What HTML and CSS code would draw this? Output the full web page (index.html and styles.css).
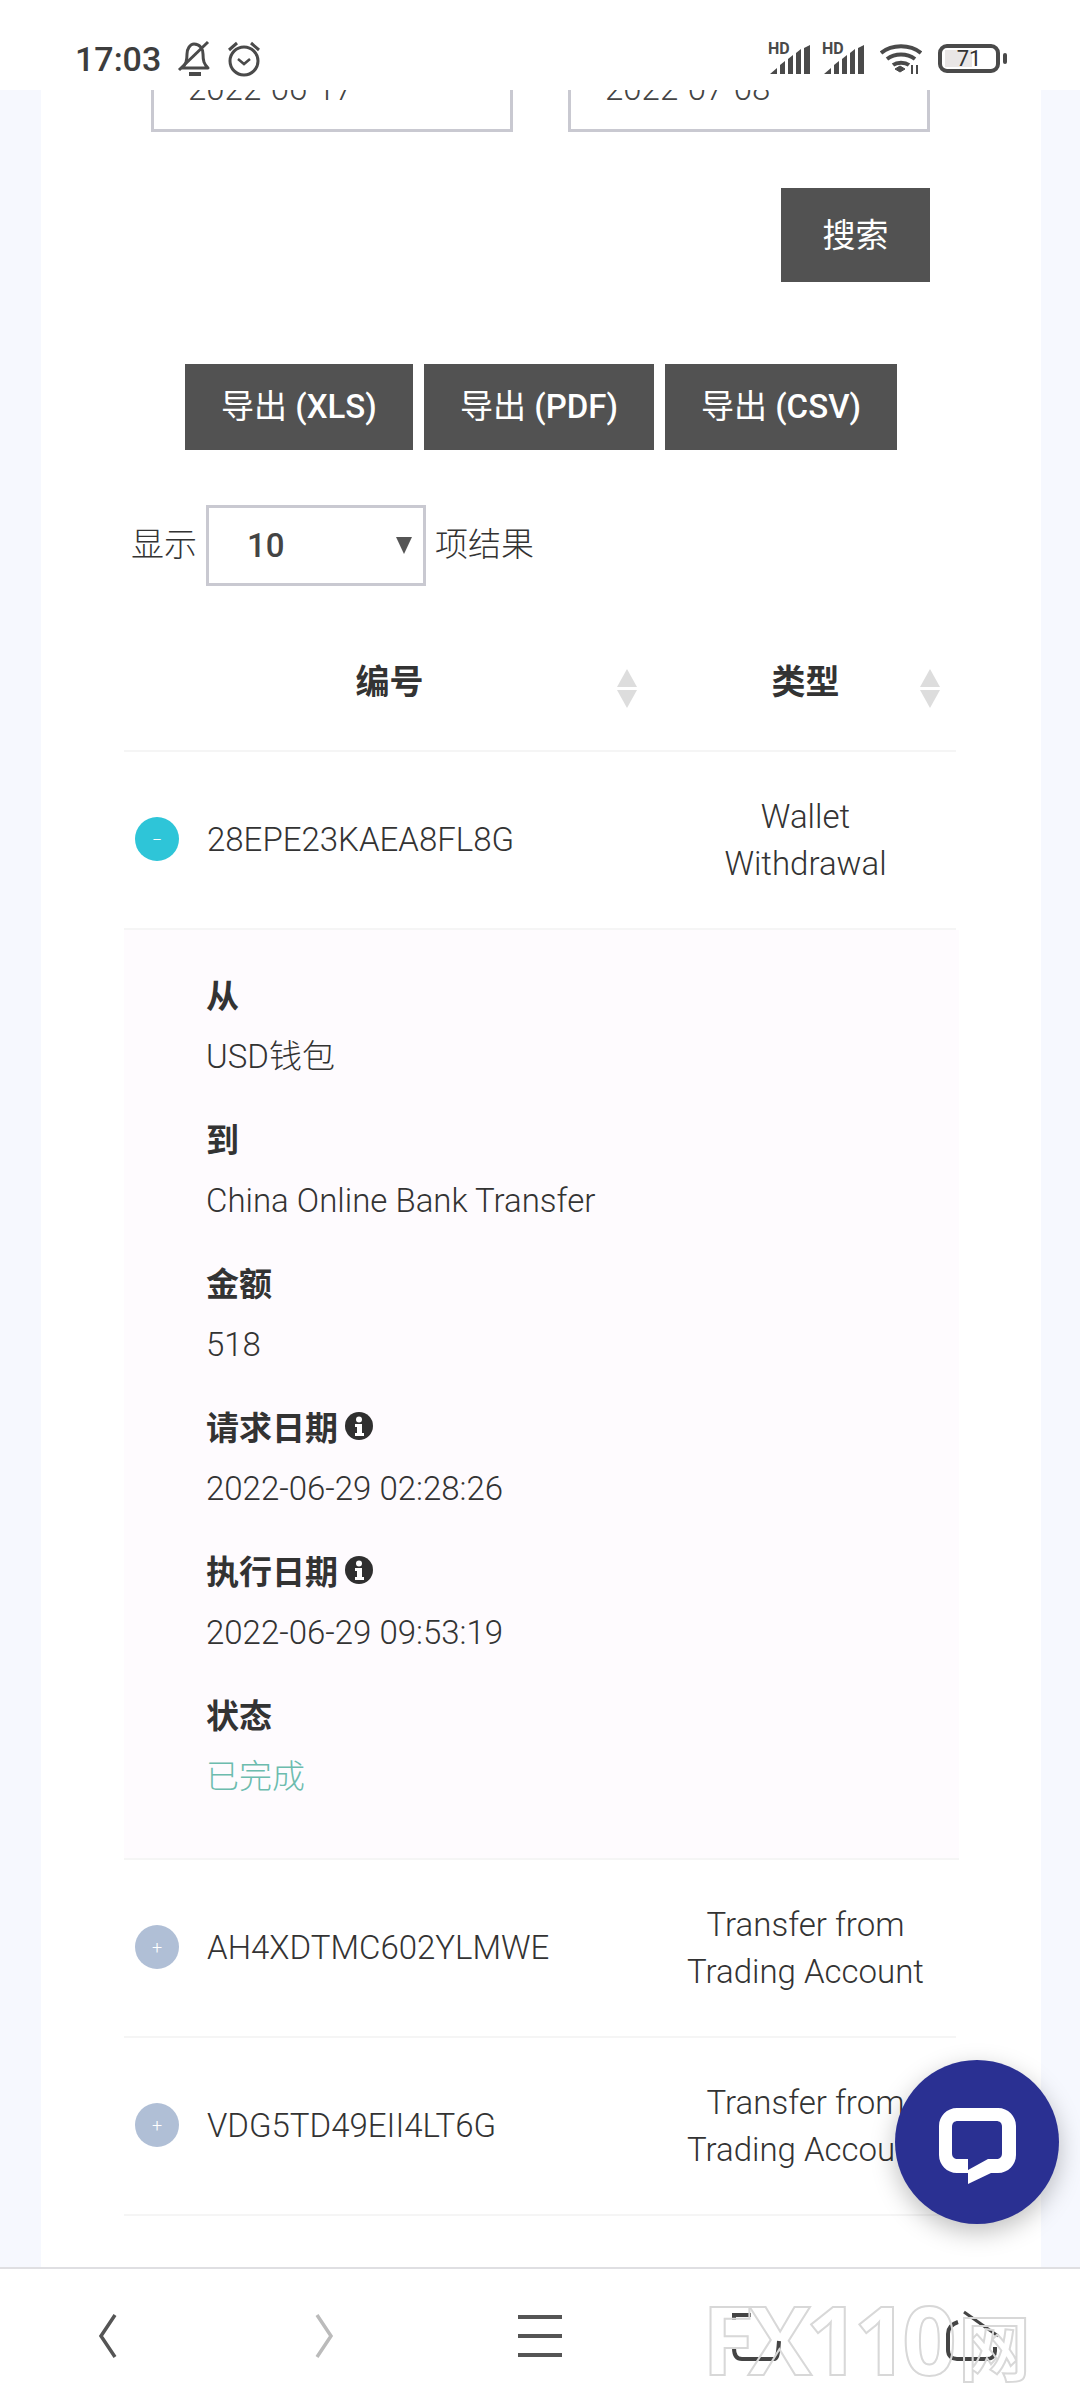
FILE: index.html
```html
<!DOCTYPE html>
<html lang="zh">
<head>
    <meta charset="UTF-8">
    <meta name="viewport" content="width=device-width, initial-scale=1.0">
    <title>Transactions</title>
    <link rel="stylesheet" href="styles.css">
</head>
<body>
    <div class="phone">
        <div class="statusBar">
            <div class="statusLeft">
                <span class="clock">17:03</span>
                <svg class="bellIcon" width="36" height="38" viewBox="0 0 36 38" fill="none" stroke="#4a4a4a" stroke-width="3">
                    <path d="M17 4c6 0 9 5 9 10 0 7 1 10 5 14H5c4-4 5-7 5-14 0-5 3-10 7-10z" stroke-linejoin="round"/>
                    <path d="M2 30L31 2"/>
                    <path d="M12 34h12" stroke-width="4"/>
                </svg>
                <svg class="alarmIcon" width="36" height="38" viewBox="0 0 36 38" fill="none" stroke="#4a4a4a" stroke-width="3">
                    <circle cx="18" cy="21" r="14"/>
                    <path d="M12 19l6 5 6-5" stroke-width="2.5"/>
                    <path d="M3 10l8-7M33 10l-8-7"/>
                </svg>
            </div>
            <div class="statusRight">
                <div class="signal">
                    <span class="hd">HD</span>
                    <svg width="40" height="29" viewBox="0 0 40 29" fill="#4a4a4a">
                        <path d="M0 29l7-6v6zM10 20l5-4v13h-5zM18 14l5-4v19h-5zM26 8l5-4v25h-5zM34 3l6-3v29h-6z"/>
                    </svg>
                </div>
                <div class="signal">
                    <span class="hd">HD</span>
                    <svg width="40" height="29" viewBox="0 0 40 29" fill="#4a4a4a">
                        <path d="M0 29l7-6v6zM10 20l5-4v13h-5zM18 14l5-4v19h-5zM26 8l5-4v25h-5zM34 3l6-3v29h-6z"/>
                    </svg>
                </div>
                <svg class="wifiIcon" width="42" height="30" viewBox="0 0 42 30" fill="none" stroke="#4a4a4a" stroke-width="4">
                    <path d="M1 9c11-9 29-9 40 0"/>
                    <path d="M7 15c8-6 20-6 28 0"/>
                    <path d="M13 21c4-3 12-3 16 0"/>
                    <path d="M20 28l-5-3 5-3 5 3z" fill="#4a4a4a" stroke-width="1"/>
                    <path d="M32 30v-9M37 30v-9" stroke-width="2"/>
                </svg>
                <div class="battery">
                    <div class="batteryBody"><span class="batteryFill"></span><span class="batteryText">71</span></div>
                    <span class="batteryCap"></span>
                </div>
            </div>
        </div>

        <div class="viewport">
            <div class="card">
                <div class="dateRow">
                    <div class="dateField">2022-06-17</div>
                    <div class="dateField">2022-07-08</div>
                </div>

                <div class="searchRow">
                    <button class="darkButton searchButton">搜索</button>
                </div>

                <div class="exportRow">
                    <button class="darkButton exportButton">导出 <b>(XLS)</b></button>
                    <button class="darkButton exportButton">导出 <b>(PDF)</b></button>
                    <button class="darkButton exportButton">导出 <b>(CSV)</b></button>
                </div>

                <div class="lengthRow">
                    <span class="lengthLabel">显示</span>
                    <div class="lengthSelect"><span>10</span><span class="selectArrow"></span></div>
                    <span class="lengthLabel">项结果</span>
                </div>

                <div class="table">
                    <div class="tableHead">
                        <div class="headCell">编号<span class="sortArrows"></span></div>
                        <div class="headCell">类型<span class="sortArrows"></span></div>
                    </div>

                    <div class="tableRow">
                        <div class="idCell"><span class="toggle toggleOpen">−</span>28EPE23KAEA8FL8G</div>
                        <div class="typeCell">Wallet<br>Withdrawal</div>
                    </div>

                    <div class="details">
                        <div class="detailItem">
                            <div class="detailLabel">从</div>
                            <div class="detailValue">USD钱包</div>
                        </div>
                        <div class="detailItem">
                            <div class="detailLabel">到</div>
                            <div class="detailValue">China Online Bank Transfer</div>
                        </div>
                        <div class="detailItem">
                            <div class="detailLabel">金额</div>
                            <div class="detailValue">518</div>
                        </div>
                        <div class="detailItem">
                            <div class="detailLabel">请求日期
                                <svg class="infoIcon" width="28" height="28" viewBox="0 0 28 28">
                                    <circle cx="14" cy="14" r="14" fill="#2f2f2f"/>
                                    <circle cx="14" cy="7.5" r="3" fill="#fff"/>
                                    <path d="M10 12h7v9h2v3H10v-3h2v-6h-2z" fill="#fff"/>
                                </svg>
                            </div>
                            <div class="detailValue">2022-06-29 02:28:26</div>
                        </div>
                        <div class="detailItem">
                            <div class="detailLabel">执行日期
                                <svg class="infoIcon" width="28" height="28" viewBox="0 0 28 28">
                                    <circle cx="14" cy="14" r="14" fill="#2f2f2f"/>
                                    <circle cx="14" cy="7.5" r="3" fill="#fff"/>
                                    <path d="M10 12h7v9h2v3H10v-3h2v-6h-2z" fill="#fff"/>
                                </svg>
                            </div>
                            <div class="detailValue">2022-06-29 09:53:19</div>
                        </div>
                        <div class="detailItem">
                            <div class="detailLabel">状态</div>
                            <div class="detailValue statusDone">已完成</div>
                        </div>
                    </div>

                    <div class="tableRow">
                        <div class="idCell"><span class="toggle">+</span>AH4XDTMC602YLMWE</div>
                        <div class="typeCell">Transfer from<br>Trading Account</div>
                    </div>

                    <div class="tableRow">
                        <div class="idCell"><span class="toggle">+</span>VDG5TD49EII4LT6G</div>
                        <div class="typeCell">Transfer from<br>Trading Account</div>
                    </div>

                    <div class="tableRow">
                        <div class="idCell"></div>
                        <div class="typeCell typeCellCut">Transfer from</div>
                    </div>
                </div>
            </div>

            <button class="chatButton">
                <svg width="77" height="76" viewBox="0 0 77 76">
                    <path d="M18 0h41c10 0 18 8 18 18v29c0 10-8 18-18 18h-7L29 76V65H18C8 65 0 57 0 47V18C0 8 8 0 18 0z" fill="#fff"/>
                    <path d="M19 13h38c4 0 6 2 6 6v26c0 4-2 6-6 6h-8L29 62V51H19c-4 0-6-2-6-6V19c0-4 2-6 6-6z" fill="#2a3092"/>
                </svg>
            </button>
        </div>

        <div class="bottomBar">
            <svg width="26" height="46" viewBox="0 0 26 46" fill="none" stroke="#555" stroke-width="3.5"><path d="M20 2L6 23l14 21"/></svg>
            <svg width="26" height="46" viewBox="0 0 26 46" fill="none" stroke="#bbb" stroke-width="3.5"><path d="M6 2l14 21L6 44"/></svg>
            <svg width="46" height="46" viewBox="0 0 46 46" fill="none" stroke="#555" stroke-width="4"><path d="M1 4h44M1 23h44M1 42h44"/></svg>
            <svg width="52" height="52" viewBox="0 0 52 52" fill="none" stroke="#444" stroke-width="4"><path d="M4 10V5h17M4 38c0 8 3 11 8 11h32c3 0 4-3 5-18"/></svg>
            <svg width="56" height="52" viewBox="0 0 56 52" fill="none" stroke="#444" stroke-width="4"><path d="M14 12c-6 2-10 6-10 12v16c0 6 4 9 9 9h30c5 0 8-3 8-8v-4"/><path d="M20 2l34 24" stroke-width="3"/></svg>
            <div class="watermark"><span>FX110</span><span class="watermarkCjk">网</span></div>
        </div>
    </div>
</body>
</html>
```
FILE: styles.css
```css
body {
    margin: 0;
    padding: 0;
    background-color: #ffffff;
    font-family: Roboto, "Noto Sans CJK SC", sans-serif;
    color: #333333;
}

.phone {
    display: flex;
    flex-direction: column;
    width: 1080px;
    height: 2400px;
    overflow: hidden;
}

/* status bar */
.statusBar {
    display: flex;
    justify-content: space-between;
    align-items: center;
    flex: 0 0 90px;
    box-sizing: border-box;
    padding: 27px 73px 0 75px;
    background-color: #ffffff;
}

.statusLeft,
.statusRight {
    display: flex;
    align-items: center;
}

.clock {
    font-size: 34px;
    font-weight: 500;
    color: #3d3d3d;
    margin-right: 16px;
}

.alarmIcon {
    margin-left: 13px;
}

.signal {
    position: relative;
    width: 40px;
    height: 30px;
    margin-right: 14px;
}

.signal svg {
    position: absolute;
    left: 0;
    bottom: 0;
}

.hd {
    position: absolute;
    left: -2px;
    top: -3px;
    font-size: 16px;
    line-height: 16px;
    font-weight: 700;
    color: #4a4a4a;
}

.wifiIcon {
    margin: 0 16px 0 2px;
}

.battery {
    display: flex;
    align-items: center;
}

.batteryBody {
    position: relative;
    box-sizing: border-box;
    width: 62px;
    height: 29px;
    border: 4px solid #4a4a4a;
    border-radius: 9px;
    text-align: center;
    font-size: 22px;
    line-height: 21px;
    color: #333333;
}

.batteryFill {
    position: absolute;
    left: 3px;
    top: 2px;
    bottom: 2px;
    width: 27px;
    background-color: #e9e6e6;
}

.batteryText {
    position: relative;
}

.batteryCap {
    width: 4px;
    height: 11px;
    margin-left: 3px;
    border-radius: 2px;
    background-color: #4a4a4a;
}

/* scrolled page */
.viewport {
    position: relative;
    flex: 1;
    overflow: hidden;
    background-color: #f6f8fe;
    border-bottom: 2px solid #dfdfe2;
}

.card {
    width: 1000px;
    height: 100%;
    margin-left: 41px;
    overflow: hidden;
    background-color: #ffffff;
    font-weight: 300;
    font-size: 33px;
}

.dateRow {
    display: flex;
    gap: 55px;
    margin: -40px 0 0 110px;
}

.dateField {
    box-sizing: border-box;
    width: 362px;
    height: 82px;
    padding: 19px 34px 0;
    border: 3px solid #c9c9d1;
    border-top: none;
    font-size: 33px;
    color: #444444;
}

.searchRow {
    display: flex;
    justify-content: flex-end;
    margin: 56px 111px 0 0;
}

.darkButton {
    border: none;
    background-color: #525252;
    color: #ffffff;
    font-family: Roboto, "Noto Sans CJK SC", sans-serif;
    font-size: 33px;
    padding: 0 0 4px;
}

.darkButton b {
    font-weight: 500;
}

.searchButton {
    width: 149px;
    height: 94px;
}

.exportRow {
    display: flex;
    justify-content: center;
    gap: 11px;
    margin: 82px 0 0;
}

.exportButton {
    width: 228px;
    height: 86px;
    padding-bottom: 7px;
}

.exportButton:nth-child(2) {
    width: 230px;
}

.exportButton:last-child {
    width: 232px;
}

.lengthRow {
    display: flex;
    align-items: center;
    gap: 9px;
    margin: 55px 0 0 91px;
}

.lengthLabel {
    padding-bottom: 8px;
}

.lengthRow .lengthLabel:first-child {
    margin-left: -1px;
}

.lengthSelect {
    display: flex;
    justify-content: space-between;
    align-items: center;
    box-sizing: border-box;
    width: 220px;
    height: 81px;
    padding: 0 11px 0 38px;
    border: 3px solid #c9c9d1;
    font-weight: 500;
    color: #444444;
}

.selectArrow {
    width: 0;
    height: 0;
    border-left: 8px solid transparent;
    border-right: 8px solid transparent;
    border-top: 17px solid #555555;
}

/* table */
.table {
    margin: 0 85px 0 83px;
}

.tableHead,
.tableRow {
    display: grid;
    grid-template-columns: 531px 301px;
    border-bottom: 2px solid #f5f5f5;
    box-sizing: border-box;
}

.tableHead {
    height: 166px;
}

.tableRow {
    height: 178px;
    align-items: center;
}

.headCell {
    position: relative;
    display: flex;
    justify-content: center;
    align-items: center;
    box-sizing: border-box;
    height: 164px;
    padding-top: 23px;
    font-size: 34px;
    font-weight: 700;
}

.sortArrows {
    position: absolute;
    right: 18px;
    top: 83px;
    width: 0;
    height: 0;
    border-left: 10px solid transparent;
    border-right: 10px solid transparent;
    border-bottom: 18px solid #dddddd;
}

.headCell:last-child .sortArrows {
    right: 16px;
}

.sortArrows::after {
    content: "";
    position: absolute;
    left: -10px;
    top: 21px;
    width: 0;
    height: 0;
    border-left: 10px solid transparent;
    border-right: 10px solid transparent;
    border-top: 18px solid #dddddd;
}

.idCell {
    display: flex;
    align-items: center;
    gap: 28px;
    padding: 0 0 2px 11px;
}

.toggle {
    display: flex;
    justify-content: center;
    align-items: center;
    width: 44px;
    height: 44px;
    border-radius: 50%;
    background-color: #b0bfd6;
    color: #ffffff;
    font-size: 18px;
}

.toggleOpen {
    background-color: #2ec5d8;
}

.typeCell {
    text-align: center;
    line-height: 47px;
}

.typeCellCut {
    padding-bottom: 34px;
}

.details {
    box-sizing: border-box;
    height: 930px;
    margin-right: -3px;
    padding: 42px 0 0 82px;
    background-color: #fefbfe;
    border-bottom: 2px solid #f5f5f5;
}

.detailItem {
    margin-bottom: 19px;
}

.detailLabel {
    display: flex;
    align-items: center;
    gap: 7px;
    height: 44px;
    font-weight: 700;
    font-size: 33px;
}

.detailValue {
    margin-top: 19px;
    height: 62px;
    line-height: 44px;
}

.statusDone {
    color: #6cbcae;
}

.chatButton {
    position: absolute;
    left: 895px;
    top: 1970px;
    display: flex;
    justify-content: center;
    align-items: center;
    width: 164px;
    height: 164px;
    padding: 7px 0 0;
    border: none;
    border-radius: 50%;
    background-color: #2a3092;
    box-shadow: 0 8px 24px rgba(0, 0, 0, 0.25);
}

/* browser bar */
.bottomBar {
    position: relative;
    display: grid;
    grid-template-columns: repeat(5, 216px);
    justify-items: center;
    align-items: center;
    flex: 0 0 131px;
    padding-top: 3px;
    box-sizing: border-box;
    background-color: #ffffff;
}

.watermark {
    position: absolute;
    left: 702px;
    top: 4px;
    display: flex;
    align-items: baseline;
    font-family: "Open Sans", "Noto Sans CJK SC", sans-serif;
    font-size: 95px;
    font-weight: 700;
    letter-spacing: -6px;
    color: transparent;
    -webkit-text-stroke: 2px #d8d8d8;
}

.watermarkCjk {
    margin-left: 8px;
    font-family: "Noto Sans CJK SC", sans-serif;
    font-size: 72px;
    letter-spacing: 0;
}
```
